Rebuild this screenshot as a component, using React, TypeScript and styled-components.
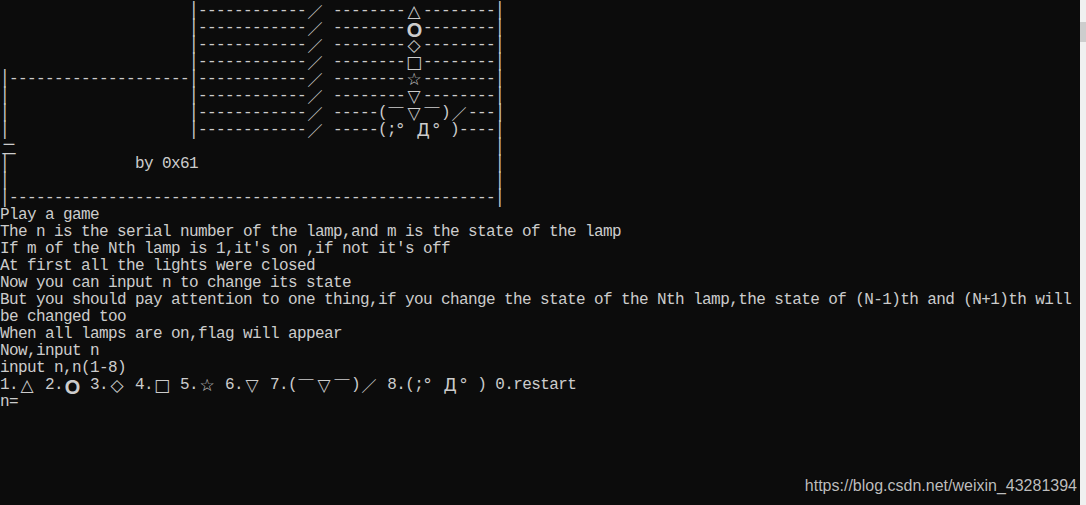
import React from "react";
import styled, { createGlobalStyle } from "styled-components";

const Global = createGlobalStyle`
  html, body { margin: 0; padding: 0; background: #0c0c0c; }
  body { overflow: hidden; }
`;

const Window = styled.div`
  position: relative;
  display: flex;
  width: 1086px;
  height: 505px;
  background: #0c0c0c;
  overflow: hidden;
`;

const Console = styled.div`
  flex: 0 0 1080px;
  padding-top: 3px;
  color: #cccccc;
  font-family: "Liberation Mono", monospace;
  font-size: 16px;
  letter-spacing: -0.6px;
`;

const Line = styled.div`
  height: 17px;
  line-height: 17px;
  white-space: pre;
`;

const Pipe = styled.span`
  display: inline-block;
  width: 9px;
  text-align: center;
  letter-spacing: 0;
  transform: scaleY(1.22);
`;

type Kind = "shape" | "round" | "cjk";

const Wide = styled.span<{ $left?: boolean; $kind: Kind }>`
  display: inline-block;
  width: 18px;
  height: 17px;
  overflow: visible;
  vertical-align: top;
  text-align: ${(p) => (p.$left ? "left" : "center")};
  font-family: ${(p) =>
    p.$kind === "shape"
      ? '"DejaVu Sans", "Noto Sans CJK SC", sans-serif'
      : '"Noto Sans CJK SC", "DejaVu Sans", sans-serif'};
  font-size: ${(p) =>
    p.$kind === "cjk" ? "15px" : p.$kind === "round" ? "19px" : "17px"};
  font-weight: ${(p) => (p.$kind === "round" ? 700 : 400)};
  line-height: 17px;
  letter-spacing: 0;
`;

const Scrollbar = styled.div`
  flex: 0 0 6px;
  background: #f0f0f0;
  padding-top: 22px;
`;

const Thumb = styled.div`
  height: 20px;
  background: #cdcdcd;
`;

const Watermark = styled.div`
  position: absolute;
  right: 9px;
  bottom: 10px;
  font-family: "Liberation Sans", Arial, sans-serif;
  font-size: 16px;
  line-height: 18px;
  color: #bdbdbd;
  text-shadow: 0 0 1px #000;
`;

const sp = (n: number) => " ".repeat(n);
const dash = (n: number) => "-".repeat(n);

const lines: string[] = [
  sp(21) + "|------------／ --------△--------|",
  sp(21) + "|------------／ --------Ｏ--------|",
  sp(21) + "|------------／ --------◇--------|",
  sp(21) + "|------------／ --------□--------|",
  "|" + dash(20) + "|------------／ --------☆--------|",
  "|" + sp(20) + "|------------／ --------▽--------|",
  "|" + sp(20) + "|------------／ -----(￣▽￣)／---|",
  "|" + sp(20) + "|------------／ -----(;°Д°)----|",
  "二" + sp(53) + "|",
  "|" + sp(14) + "by 0x61" + sp(33) + "|",
  "|" + sp(54) + "|",
  "|" + dash(54) + "|",
  "Play a game",
  "The n is the serial number of the lamp,and m is the state of the lamp",
  "If m of the Nth lamp is 1,it's on ,if not it's off",
  "At first all the lights were closed",
  "Now you can input n to change its state",
  "But you should pay attention to one thing,if you change the state of the Nth lamp,the state of (N-1)th and (N+1)th will",
  "be changed too",
  "When all lamps are on,flag will appear",
  "Now,input n",
  "input n,n(1-8)",
  "1.△ 2.Ｏ 3.◇ 4.□ 5.☆ 6.▽ 7.(￣▽￣)／ 8.(;°Д°) 0.restart",
  "n=",
];

const SHAPES = "△◇□☆▽Д°";

function kindOf(ch: string): Kind {
  if (ch === "Ｏ") return "round";
  if (SHAPES.includes(ch)) return "shape";
  return "cjk";
}

function renderLine(text: string) {
  const parts: React.ReactNode[] = [];
  let buf = "";
  const flush = () => {
    if (buf) {
      parts.push(buf);
      buf = "";
    }
  };
  Array.from(text).forEach((ch, i) => {
    if (ch === "|") {
      flush();
      parts.push(<Pipe key={i}>|</Pipe>);
    } else if (ch.charCodeAt(0) > 127) {
      flush();
      parts.push(
        <Wide key={i} $left={ch === "°"} $kind={kindOf(ch)}>
          {ch}
        </Wide>
      );
    } else {
      buf += ch;
    }
  });
  flush();
  return parts;
}

export default function App() {
  return (
    <>
      <Global />
      <Window>
        <Console>
          {lines.map((l, i) => (
            <Line key={i}>{renderLine(l)}</Line>
          ))}
        </Console>
        <Scrollbar>
          <Thumb />
        </Scrollbar>
        <Watermark>https://blog.csdn.net/weixin_43281394</Watermark>
      </Window>
    </>
  );
}
